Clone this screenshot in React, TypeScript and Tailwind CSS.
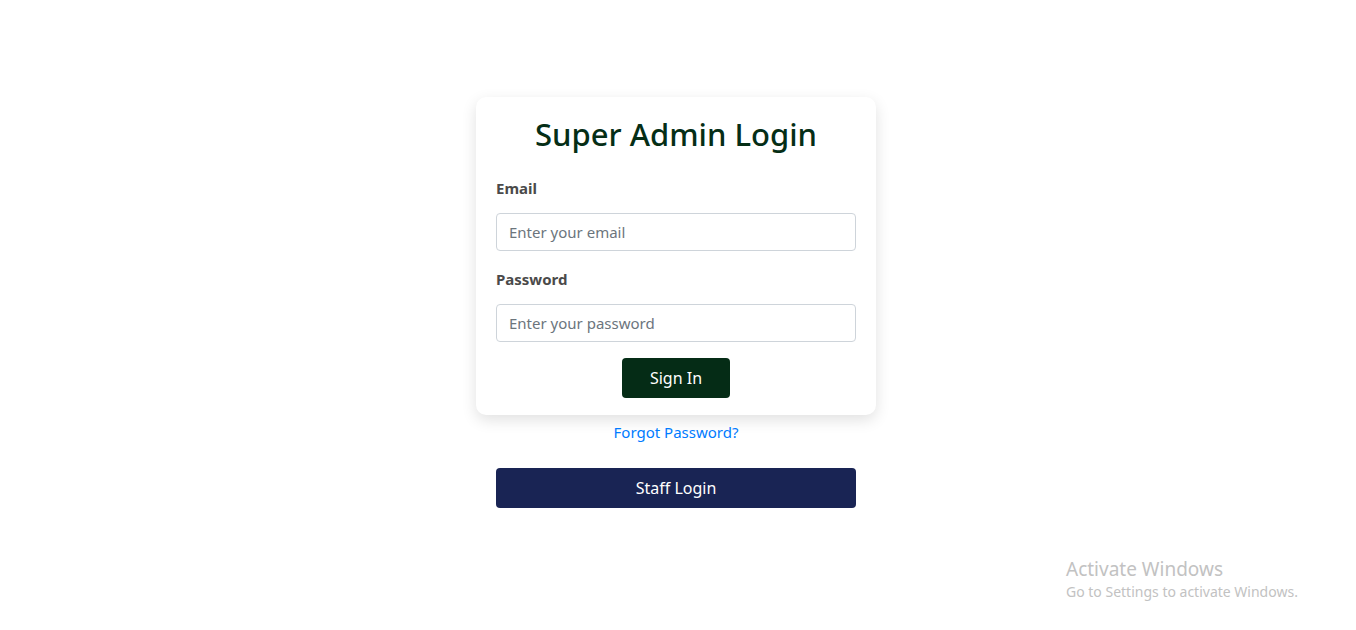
import React from "react";

export default function App() {
  return (
    <div className="relative w-full h-[630px] bg-white overflow-hidden" style={{ fontFamily: '"Noto Sans", "Open Sans", sans-serif' }}>
      <div className="flex flex-col items-center pt-[97px] pr-[4px]">
        <div className="w-[400px] bg-white rounded-[10px] shadow-[0_5px_15px_rgba(0,0,0,0.12)] px-5 pt-[17px] pb-[17px]">
          <h1 className="text-center text-[31px] leading-[40px] font-medium text-[#052e16]">Super Admin Login</h1>
          <div className="mt-[24px]">
            <label className="block text-[15px] leading-5 font-bold text-[#4a4a4a]">Email</label>
            <input
              type="email"
              placeholder="Enter your email"
              className="mt-[15px] w-full h-[38px] px-3 border border-[#ced4da] rounded-[4px] text-[15px] text-[#495057] placeholder:text-[#6c757d] outline-none"
            />
          </div>
          <div className="mt-[18px]">
            <label className="block text-[15px] leading-5 font-bold text-[#4a4a4a]">Password</label>
            <input
              type="password"
              placeholder="Enter your password"
              className="mt-[15px] w-full h-[38px] px-3 border border-[#ced4da] rounded-[4px] text-[15px] text-[#495057] placeholder:text-[#6c757d] outline-none"
            />
          </div>
          <div className="flex justify-center mt-4">
            <button className="w-[108px] h-[40px] rounded-[4px] bg-[#052c16] text-white text-[16px]">Sign In</button>
          </div>
        </div>
        <a className="mt-[6px] text-[15px] leading-[22px] text-[#007bff]">Forgot Password?</a>
        <button className="mt-[25px] w-[360px] h-[40px] rounded-[4px] bg-[#192454] text-white text-[16px]">Staff Login</button>
      </div>
      <div className="absolute left-[1066px] top-[557px] text-[#c2c2c2]">
        <div className="text-[19px] leading-[24px]">Activate Windows</div>
        <div className="text-[14px] leading-[20px] mt-[1px]">Go to Settings to activate Windows.</div>
      </div>
    </div>
  );
}
